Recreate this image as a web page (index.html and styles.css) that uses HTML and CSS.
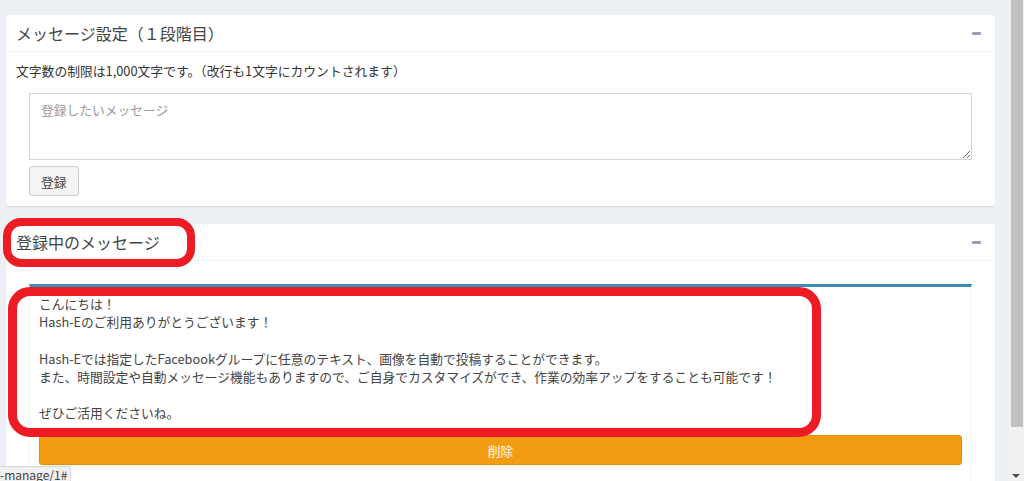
FILE: index.html
```html
<!DOCTYPE html>
<html lang="ja">
<head>
  <meta charset="UTF-8" />
  <meta name="viewport" content="width=device-width, initial-scale=1" />
  <title>メッセージ管理</title>
  <link rel="stylesheet" href="styles.css">
</head>
<body>

  <div class="page">
    <main class="content">

      <!-- Message setting -->
      <section class="box">
        <div class="box-header">
          <h3 class="box-title">メッセージ設定（１段階目）</h3>
          <span class="box-tool"></span>
        </div>
        <div class="box-body">
          <p class="note">文字数の制限は1,000文字です。（改行も1文字にカウントされます）</p>
          <div class="form-group">
            <textarea class="message-input" placeholder="登録したいメッセージ"></textarea>
            <button class="btn">登録</button>
          </div>
        </div>
      </section>

      <!-- Registered message -->
      <section class="box">
        <div class="box-header">
          <h3 class="box-title">登録中のメッセージ</h3>
          <span class="box-tool"></span>
        </div>
        <div class="box-body">
          <div class="message-card">
            <div class="message-text">こんにちは！
Hash-Eのご利用ありがとうございます！

Hash-Eでは指定したFacebookグループに任意のテキスト、画像を自動で投稿することができます。
また、時間設定や自動メッセージ機能もありますので、ご自身でカスタマイズができ、作業の効率アップをすることも可能です！

ぜひご活用くださいね。</div>
            <button class="btn btn-warning">削除</button>
          </div>
        </div>
      </section>

    </main>

    <!-- fake browser scrollbar -->
    <div class="scrollbar">
      <div class="scroll-thumb"></div>
      <div class="scroll-arrow"></div>
    </div>
  </div>

  <!-- annotation marks -->
  <div class="mark mark-title"></div>
  <div class="mark mark-message"></div>

  <!-- status bar -->
  <div class="status">-manage/1#</div>

</body>
</html>
```

FILE: styles.css
```css
/* Reset & General */
body, html {
  margin: 0;
  padding: 0;
  height: 100%;
  overflow: hidden;
  font-family: "Noto Sans CJK JP", "Noto Sans", sans-serif;
  background: #ecf0f5;
  color: #333;
}

.page {
  display: flex;
  height: 100vh;
}

.content {
  flex: 1;
  padding: 15px 12px 0 6px;
}

/* Boxes */
.box {
  background: #fff;
  border-radius: 3px;
  box-shadow: 0 1px 1px rgba(0,0,0,0.1);
  margin-bottom: 18px;
}

.box-header {
  display: flex;
  justify-content: space-between;
  align-items: center;
  height: 36px;
  padding: 0 14px 0 10px;
  border-bottom: 1px solid #f4f4f4;
}

.box-title {
  margin: 0;
  font-size: 16px;
  font-weight: 400;
  color: #444;
}

.box-tool {
  width: 9px;
  height: 3px;
  border-radius: 1px;
  background: #97a0b3;
}

.box-body {
  padding: 10px;
}

.note {
  margin: 0;
  font-size: 12.8px;
  line-height: 18px;
}

.form-group {
  padding: 13px 13px 0;
}

.message-input {
  display: block;
  box-sizing: border-box;
  width: 100%;
  height: 67px;
  padding: 6px 11px;
  border: 1px solid #d2d6de;
  font-family: inherit;
  font-size: 12.75px;
  resize: vertical;
}
.message-input::placeholder {
  color: #999;
}

.btn {
  margin-top: 6px;
  height: 30px;
  padding: 0 11px;
  font-family: inherit;
  font-size: 12.75px;
  color: #444;
  background: #f4f4f4;
  border: 1px solid #ccc;
  border-radius: 3px;
}

/* Registered message */
.message-card {
  margin: 13px 13px 0;
  border: 1px solid #f4f4f4;
  border-top: 3px solid #3c8dbc;
  padding: 8px 9px 10px;
  height: 400px;
}

.message-text {
  white-space: pre-line;
  font-size: 12.75px;
  line-height: 18.2px;
  color: #444;
}

.btn-warning {
  display: block;
  width: 100%;
  margin-top: 13px;
  background: #f39c12;
  border-color: #e08e0b;
  color: #fff;
}

/* Scrollbar */
.scrollbar {
  width: 17px;
  background: #f1f1f1;
  display: flex;
  flex-direction: column;
  align-items: center;
}
.scroll-thumb {
  width: 12px;
  height: 427px;
  margin-left: 3px;
  background: #c1c1c1;
}
.scroll-arrow {
  margin-top: auto;
  margin-bottom: 3px;
  border-left: 4px solid transparent;
  border-right: 4px solid transparent;
  border-top: 4px solid #505050;
}

/* Annotation marks */
.mark {
  position: absolute;
  border: 8px solid #ed1c24;
  box-sizing: border-box;
}
.mark-title {
  left: 3px;
  top: 218px;
  width: 192px;
  height: 49px;
  border-radius: 18px;
}
.mark-message {
  left: 8px;
  top: 287px;
  width: 813px;
  height: 150px;
  border-width: 9px;
  border-radius: 22px;
}

/* Status bar */
.status {
  position: absolute;
  left: 0;
  bottom: 0;
  height: 14px;
  padding: 0 3px 0 0;
  font-size: 12px;
  line-height: 15px;
  color: #444;
  background: #f1f1f1;
  border: 1px solid #d9d9d9;
  border-left: none;
  border-bottom: none;
  border-radius: 0 3px 0 0;
}
```
